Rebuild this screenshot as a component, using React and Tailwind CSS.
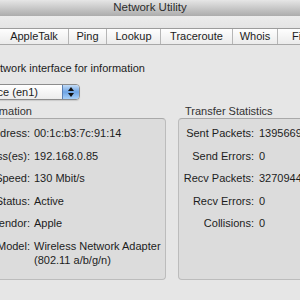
import React from "react";

const tabs = [
  { name: "AppleTalk", w: "w-[68px]" },
  { name: "Ping", w: "w-[38px] border-l" },
  { name: "Lookup", w: "w-[54px] border-l" },
  { name: "Traceroute", w: "w-[72px] border-l" },
  { name: "Whois", w: "w-[45px] border-l" },
  { name: "Finger", w: "w-[60px] border-l" },
];

const info = [
  ["Hardware Address:", "00:1c:b3:7c:91:14"],
  ["IP Address(es):", "192.168.0.85"],
  ["Link Speed:", "130 Mbit/s"],
  ["Link Status:", "Active"],
  ["Vendor:", "Apple"],
];

const stats = [
  ["Sent Packets:", "13956695"],
  ["Send Errors:", "0"],
  ["Recv Packets:", "32709441"],
  ["Recv Errors:", "0"],
  ["Collisions:", "0"],
];

const App = () => {
  return (
    <div className="w-[300px] h-[300px] overflow-hidden bg-[#e6e6e6] font-['Liberation_Sans',Arial,sans-serif] text-[11px] text-[#1c1c1c]">
      {/* 타이틀 바 */}
      <div className="h-[16px] flex items-center justify-center bg-gradient-to-b from-[#e6e6e6] to-[#acacac] text-[11.5px] text-[#2c2c2c]">
        Network Utility
      </div>
      <div className="h-[12px] bg-gradient-to-b from-[#ececec] to-[#e4e4e4]" />

      {/* 탭 */}
      <div className="h-[17px] flex border-t border-b border-t-[#9c9c9c] border-b-[#a8a8a8] bg-gradient-to-b from-[#fefefe] to-[#ebebeb] whitespace-nowrap">
        {tabs.map((t) => (
          <div key={t.name} className={`${t.w} shrink-0 flex items-center justify-center border-[#b6b6b6]`}>
            {t.name}
          </div>
        ))}
      </div>

      <div className="flex flex-col">
        <p className="ml-[-55px] mt-[15.5px] leading-[14px] whitespace-nowrap">
          Select a network interface for information
        </p>

        {/* 팝업 버튼 */}
        <div className="ml-[-86px] mt-[9.5px] w-[166px] h-[16px] flex rounded-[4px] border border-[#8c8c8c] bg-gradient-to-b from-white to-[#ececec] shadow-[0_1px_1px_rgba(0,0,0,0.12)] overflow-hidden">
          <div className="flex-1 pl-[8px] flex items-center whitespace-nowrap leading-none">
            Network Interface (en1)
          </div>
          <div className="w-[17px] h-full border-l border-[#5a7fb3] bg-gradient-to-b from-[#c4dcf6] via-[#6ea4e4] to-[#a8d0f8] flex flex-col items-center justify-center gap-[2px]">
            <svg width="6" height="4" viewBox="0 0 6 4">
              <path d="M3 0 L6 4 L0 4 Z" fill="#111" />
            </svg>
            <svg width="6" height="4" viewBox="0 0 6 4">
              <path d="M0 0 L6 0 L3 4 Z" fill="#111" />
            </svg>
          </div>
        </div>

        {/* 그룹 박스 */}
        <div className="flex mt-[4px]">
          <div className="ml-[-76px] w-[242px] shrink-0 flex flex-col">
            <div className="pl-[7px] leading-[14px] text-[#333] whitespace-nowrap">Interface Information</div>
            <div className="h-[162px] rounded-[4px] border border-[#bcbcbc] border-t-[#a9a9a9] bg-[#dcdcdc] pl-[6px] pt-[7px]">
              <div className="grid grid-cols-[99px_1fr] gap-x-[4px] gap-y-[8.6px] leading-[14px] whitespace-nowrap">
                {info.map(([k, v]) => (
                  <React.Fragment key={k}>
                    <div className="flex justify-end">{k}</div>
                    <div>{v}</div>
                  </React.Fragment>
                ))}
                <div className="flex justify-end">Model:</div>
                <div>
                  Wireless Network Adapter
                  <br />
                  (802.11 a/b/g/n)
                </div>
              </div>
            </div>
          </div>

          <div className="ml-[12px] w-[200px] shrink-0 flex flex-col">
            <div className="pl-[7px] leading-[14px] text-[#333] whitespace-nowrap">Transfer Statistics</div>
            <div className="h-[162px] rounded-[4px] border border-[#bcbcbc] border-t-[#a9a9a9] bg-[#dcdcdc] pl-[6px] pt-[7px]">
              <div className="grid grid-cols-[69px_1fr] gap-x-[5px] gap-y-[8.6px] leading-[14px] whitespace-nowrap">
                {stats.map(([k, v]) => (
                  <React.Fragment key={k}>
                    <div className="flex justify-end">{k}</div>
                    <div>{v}</div>
                  </React.Fragment>
                ))}
              </div>
            </div>
          </div>
        </div>
      </div>
    </div>
  );
};

export default App;
